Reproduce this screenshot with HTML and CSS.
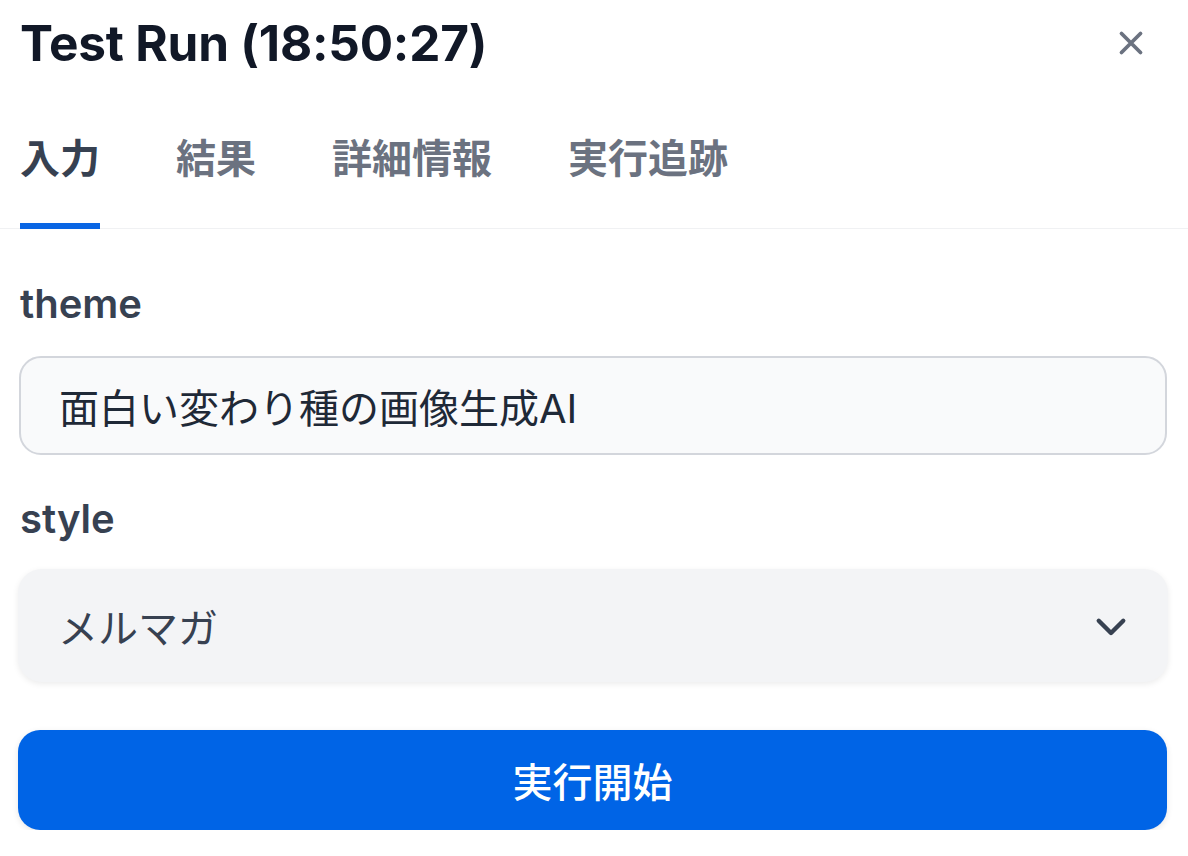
FILE: index.html
```html
<!DOCTYPE html>
<html lang="ja">
<head>
    <meta charset="UTF-8">
    <meta name="viewport" content="width=device-width, initial-scale=1.0">
    <title>Test Run</title>
    <link rel="stylesheet" href="styles.css">
</head>
<body>
    <div class="panel">
        <div class="panel-header">
            <h1 class="panel-title">Test Run (18:50:27)</h1>
            <button class="close-btn" aria-label="閉じる">
                <svg viewBox="0 0 24 24" width="38" height="38" fill="none" stroke="currentColor" stroke-width="2.4" stroke-linecap="round">
                    <path d="M6 6l12 12M18 6L6 18"/>
                </svg>
            </button>
        </div>

        <!-- tabs -->
        <div class="tabs">
            <div class="tab active">入力</div>
            <div class="tab">結果</div>
            <div class="tab">詳細情報</div>
            <div class="tab">実行追跡</div>
        </div>

        <div class="form">
            <div class="field">
                <label class="field-label">theme</label>
                <div class="text-input">面白い変わり種の画像生成AI</div>
            </div>

            <div class="field">
                <label class="field-label">style</label>
                <div class="select-input">
                    <span>メルマガ</span>
                    <svg viewBox="0 0 24 24" width="42" height="42" fill="none" stroke="currentColor" stroke-width="2.5" stroke-linecap="round" stroke-linejoin="round">
                        <path d="M5 9l7 7 7-7"/>
                    </svg>
                </div>
            </div>

            <button class="run-btn">実行開始</button>
        </div>
    </div>
</body>
</html>
```

FILE: styles.css
```css
* {
    margin: 0;
    padding: 0;
    box-sizing: border-box;
}

body {
    font-family: Inter, "Noto Sans CJK JP", sans-serif;
    background: #ffffff;
    color: #1f2937;
}

.panel {
    width: 1188px;
}

.panel-header {
    height: 86px;
    display: flex;
    align-items: center;
    justify-content: space-between;
    padding: 0 38px 0 20px;
}

.panel-title {
    font-size: 49.5px;
    font-weight: 700;
    color: #111827;
    letter-spacing: -0.2px;
}

.close-btn {
    background: none;
    border: none;
    color: #6b7280;
    display: flex;
}

.tabs {
    display: flex;
    gap: 76px;
    padding: 0 20px;
    border-bottom: 1px solid #f0f1f3;
}

.tab {
    font-size: 40px;
    font-weight: 600;
    line-height: 60px;
    color: #6b7280;
    padding: 43px 0 34px;
    border-bottom: 6px solid transparent;
    margin-bottom: -1px;
}

.tab.active {
    color: #374151;
    border-bottom-color: #0a66e4;
}

.form {
    padding: 48px 21px 0 18px;
}

.field {
    margin-bottom: 37px;
}

.field-label {
    display: block;
    font-size: 40px;
    font-weight: 600;
    line-height: 53px;
    color: #374151;
    margin-bottom: 26px;
    padding-left: 2px;
}

.text-input {
    height: 99px;
    border: 2px solid #d3d6dc;
    border-radius: 22px;
    background: #f9fafb;
    font-size: 40px;
    color: #1f2937;
    display: flex;
    align-items: center;
    padding-left: 38px;
    margin-left: 1px;
}

.select-input {
    height: 113px;
    border-radius: 24px;
    background: #f3f4f6;
    box-shadow: 0 2px 6px rgba(0, 0, 0, 0.08);
    font-size: 40px;
    color: #374151;
    display: flex;
    align-items: center;
    justify-content: space-between;
    padding: 0 36px 0 40px;
    margin-top: -2px;
    margin-right: -1px;
}

.run-btn {
    display: block;
    width: 100%;
    height: 100px;
    margin-top: 48px;
    border: none;
    border-radius: 22px;
    background: #0064e6;
    color: #ffffff;
    font-family: inherit;
    font-size: 40px;
    font-weight: 500;
    box-shadow: 0 2px 6px rgba(0, 0, 0, 0.1);
}
```
